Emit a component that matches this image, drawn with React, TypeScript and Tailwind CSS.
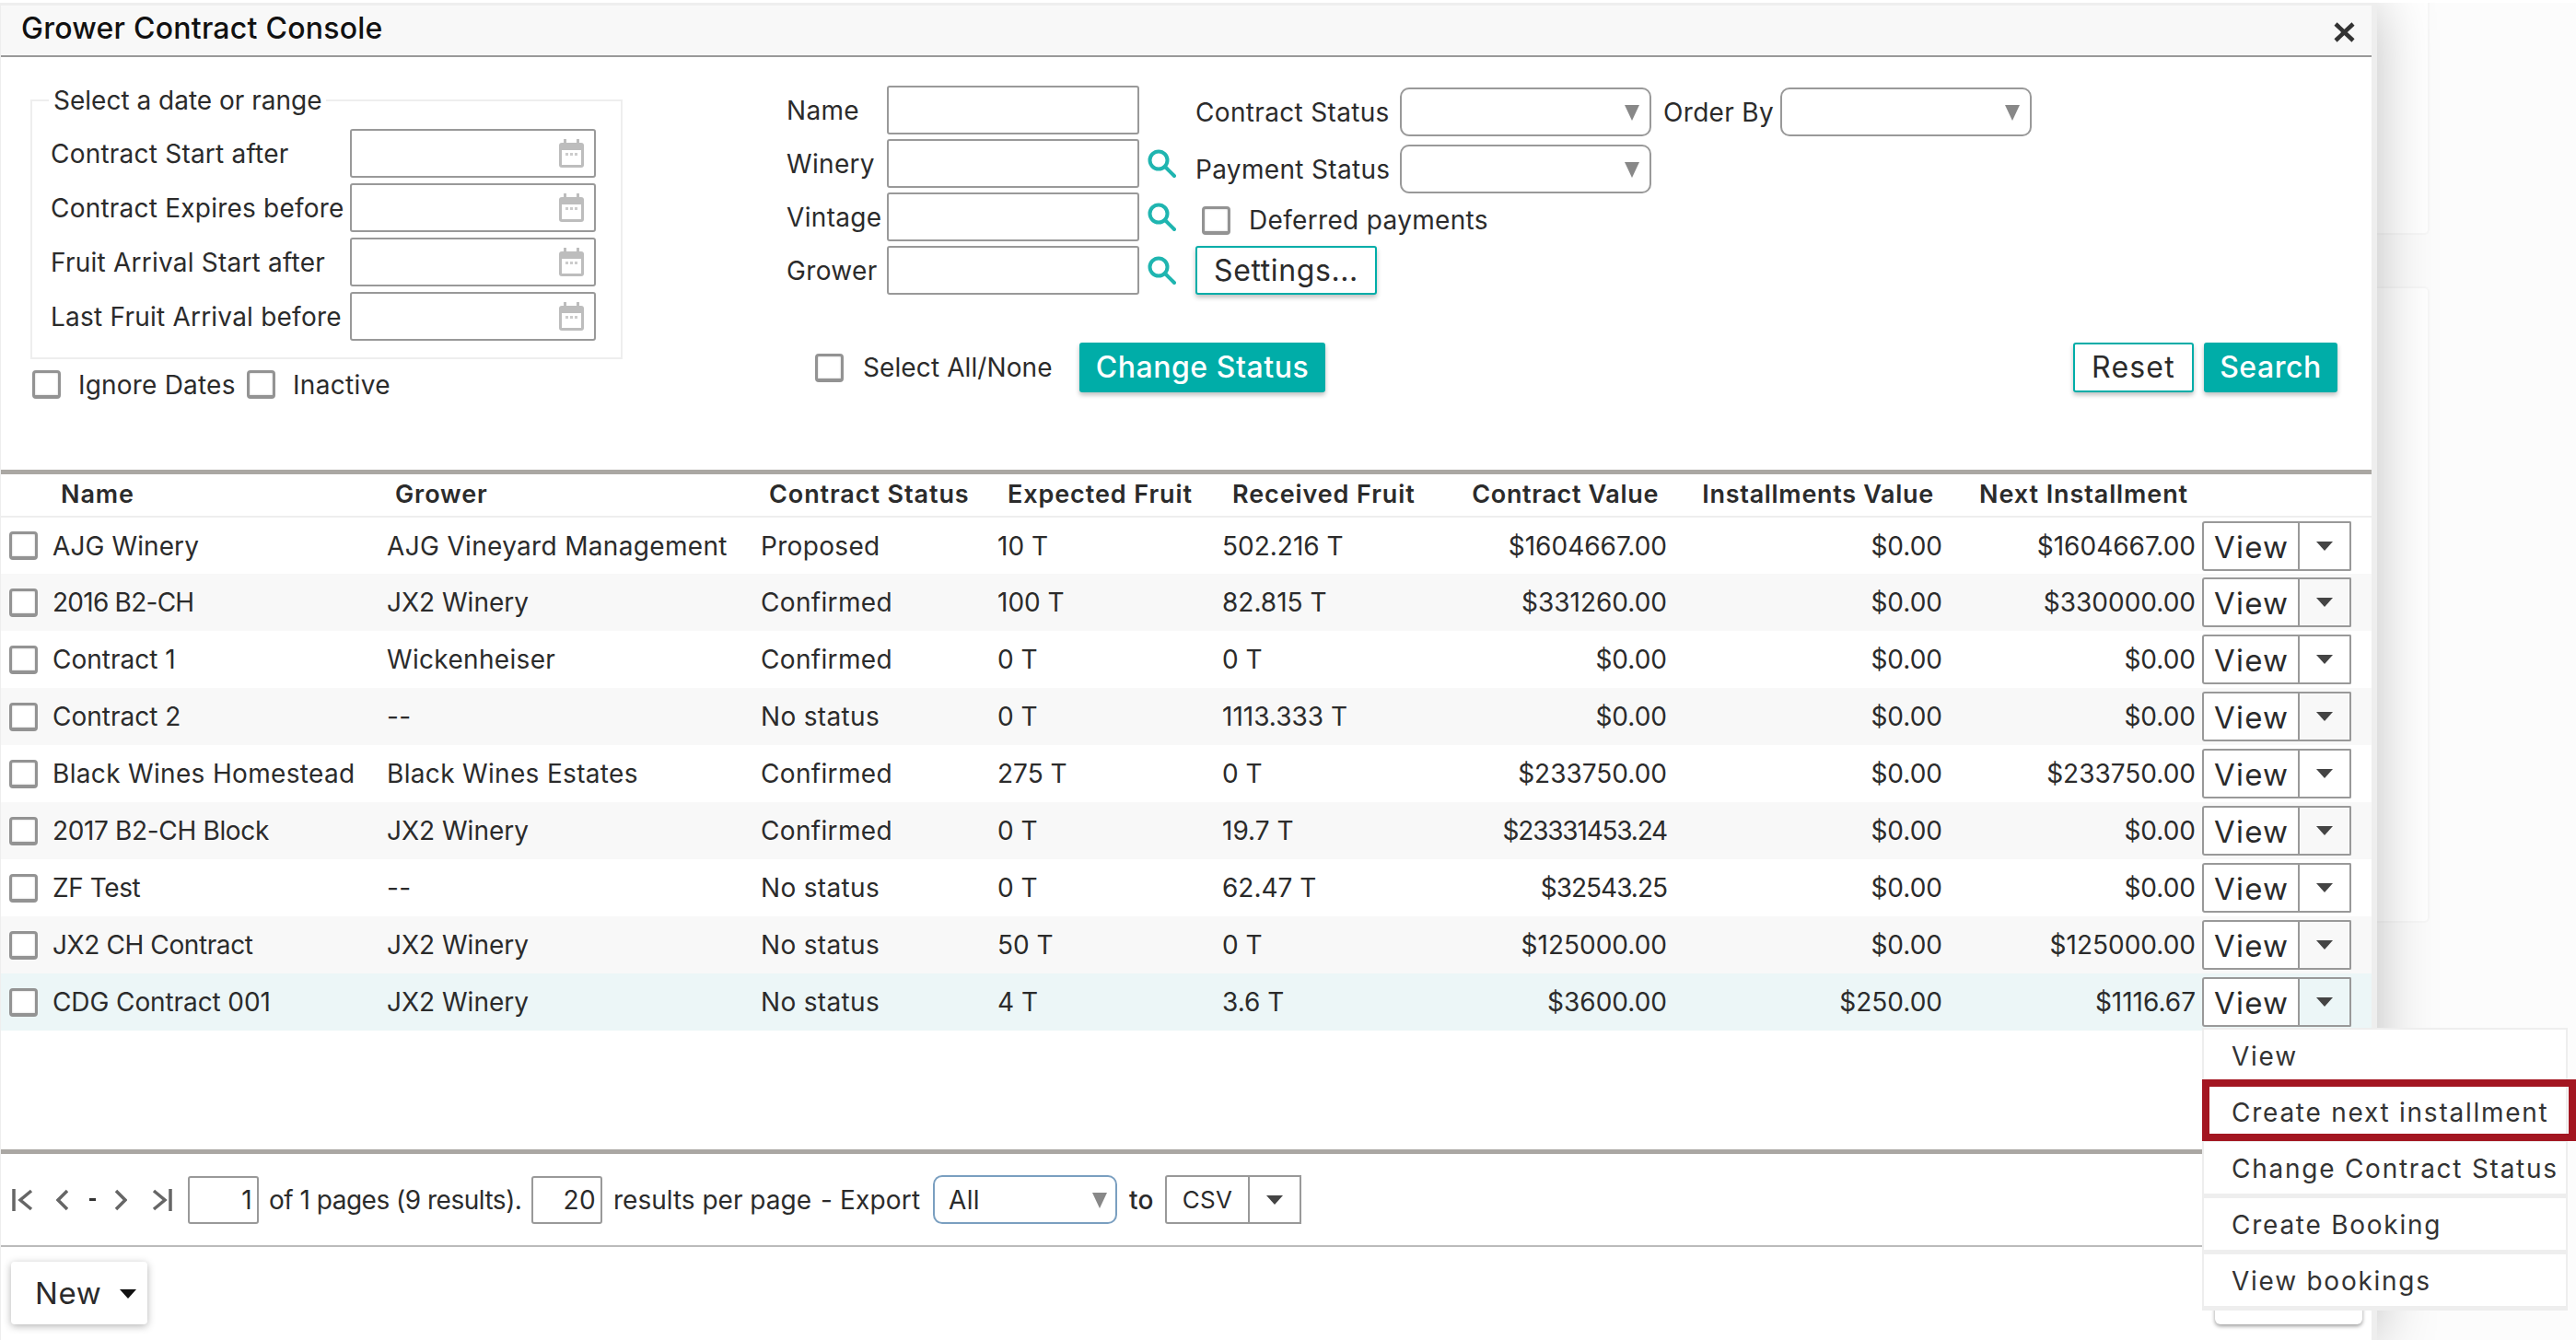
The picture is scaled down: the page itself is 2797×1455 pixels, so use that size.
import React from "react";

const rows = [
  ["AJG Winery", "AJG Vineyard Management", "Proposed", "10 T", "502.216 T", "$1604667.00", "$0.00", "$1604667.00"],
  ["2016 B2-CH", "JX2 Winery", "Confirmed", "100 T", "82.815 T", "$331260.00", "$0.00", "$330000.00"],
  ["Contract 1", "Wickenheiser", "Confirmed", "0 T", "0 T", "$0.00", "$0.00", "$0.00"],
  ["Contract 2", "--", "No status", "0 T", "1113.333 T", "$0.00", "$0.00", "$0.00"],
  ["Black Wines Homestead", "Black Wines Estates", "Confirmed", "275 T", "0 T", "$233750.00", "$0.00", "$233750.00"],
  ["2017 B2-CH Block", "JX2 Winery", "Confirmed", "0 T", "19.7 T", "$23331453.24", "$0.00", "$0.00"],
  ["ZF Test", "--", "No status", "0 T", "62.47 T", "$32543.25", "$0.00", "$0.00"],
  ["JX2 CH Contract", "JX2 Winery", "No status", "50 T", "0 T", "$125000.00", "$0.00", "$125000.00"],
  ["CDG Contract 001", "JX2 Winery", "No status", "4 T", "3.6 T", "$3600.00", "$250.00", "$1116.67"],
];

const nameTrack = [
  "tracking-[0.1px]",
  "tracking-[-0.75px]",
  "tracking-[0px]",
  "tracking-[0px]",
  "tracking-[0.33px]",
  "tracking-[-0.35px]",
  "tracking-[-0.4px]",
  "tracking-[-0.4px]",
  "tracking-[-0.1px]",
];

const valueTrack = [
  "tracking-normal",
  "tracking-normal",
  "tracking-normal",
  "tracking-normal",
  "tracking-normal",
  "tracking-[-1.2px]",
  "tracking-[-1px]",
  "tracking-normal",
  "tracking-normal",
];

function Check() {
  return <span className="block w-[31px] h-[31px] shrink-0 rounded-[4px] border-[3px] border-b-[4px] border-[#939393] bg-white shadow-[inset_0_0_2px_rgba(0,0,0,0.25)]" />;
}

function Cal() {
  return (
    <svg width="27" height="31" viewBox="0 0 27 31" className="absolute right-[11px] top-[9px]">
      <rect x="0" y="4" width="27" height="27" rx="3" fill="#bdbdbd" />
      <rect x="5" y="0" width="3" height="6" fill="#bdbdbd" />
      <rect x="19" y="0" width="3" height="6" fill="#bdbdbd" />
      <rect x="3" y="12" width="21" height="16" fill="#fff" />
      <rect x="7" y="15" width="3" height="3" fill="#ccc" />
      <rect x="12" y="15" width="3" height="3" fill="#ccc" />
      <rect x="17" y="15" width="3" height="3" fill="#ccc" />
    </svg>
  );
}

function DateRow({ label }: { label: string }) {
  return (
    <div className="flex items-center h-[53px]">
      <span className="w-[325px] whitespace-nowrap tracking-[0.22px]">{label}</span>
      <div className="relative w-[267px] h-[53px] rounded-[3px] border-2 border-[#999] bg-white">
        <Cal />
      </div>
    </div>
  );
}

function Lens() {
  return (
    <svg width="31" height="31" viewBox="0 0 31 31" className="ml-[9px] shrink-0">
      <circle cx="12" cy="12" r="9.5" fill="none" stroke="#1fb5b0" strokeWidth="4" />
      <path d="M19 19 L29 29" stroke="#1fb5b0" strokeWidth="4" strokeLinecap="round" />
    </svg>
  );
}

function NameRow({ label, icon }: { label: string; icon?: boolean }) {
  return (
    <div className="flex items-center h-[53px]">
      <span className="w-[109px] whitespace-nowrap">{label}</span>
      <input className="w-[274px] h-[53px] rounded-[3px] border-2 border-[#999] bg-white" aria-label={label} />
      {icon && <Lens />}
    </div>
  );
}

function Arrow({ className }: { className: string }) {
  return (
    <svg width="16" height="17" viewBox="0 0 16 17" className={className}>
      <path d="M0 0 H16 L8 17 Z" fill="#888" />
    </svg>
  );
}

function Select({ w }: { w: string }) {
  return (
    <div className={`relative h-[53px] rounded-[10px] border-2 border-[#999] bg-white ${w}`}>
      <Arrow className="absolute right-[2px] top-[17px] mr-[9px]" />
    </div>
  );
}

function Caret({ color = "#444" }: { color?: string }) {
  return (
    <svg width="18" height="10" viewBox="0 0 18 10">
      <path d="M0 0 H18 L9 10 Z" fill={color} />
    </svg>
  );
}

function ViewGroup() {
  return (
    <div className="flex h-[54px] w-[162px]">
      <div className="w-[106px] rounded-l-[3px] border-2 border-[#999] bg-white pl-[11px] pt-[4px] flex items-center text-[33px] tracking-[1.2px]">
        View
      </div>
      <div className="w-[56px] rounded-r-[2px] border-y-2 border-r-2 border-[#999] flex items-center justify-center">
        <Caret />
      </div>
    </div>
  );
}

function Chevron({ d, w }: { d: string; w: number }) {
  return (
    <svg width={w} height="24" viewBox={`0 0 ${w} 24`} className="shrink-0">
      <path d={d} fill="none" stroke="#666" strokeWidth="3.5" />
    </svg>
  );
}

const th = "font-semibold text-[27px] tracking-[0.9px] whitespace-nowrap";
const td = "whitespace-nowrap";

export default function App() {
  return (
    <div className="relative w-[2797px] h-[1455px] pt-[3px] bg-white overflow-hidden text-[28px] tracking-[0.33px] text-[#2b2b2b] [font-family:Inter,sans-serif]">
      <div className="flex h-[1452px] overflow-hidden bg-[#fcfcfc]">
        <div className="relative z-10 shrink-0 w-[2581px] h-[1452px] flex flex-col bg-white border-t-[3px] border-l border-r-[6px] border-[#eee] shadow-[0_0_60px_rgba(0,0,0,0.25)]">
          {/* title bar */}
          <div className="flex items-start justify-between h-[56px] bg-[#f8f8f8] border-b-2 border-[#999]">
            <h1 className="pl-[22px] pt-[7px] text-[32px] leading-[36px] tracking-[0.25px] font-medium text-[#111]">Grower Contract Console</h1>
            <svg width="23" height="22" viewBox="0 0 23 22" className="mr-[18px] mt-[18px]">
              <path d="M2 2 L21 20 M21 2 L2 20" stroke="#333" strokeWidth="4.5" />
            </svg>
          </div>

          {/* search form */}
          <div className="flex h-[448px] shrink-0">
            <div className="ml-[32px] mt-[31px] w-[643px] shrink-0">
              <fieldset className="border-2 border-[#eee] pl-[20px] pt-[15px] pb-[18px]">
                <legend className="-ml-[2px] px-[5px] leading-[32px] tracking-normal">Select a date or range</legend>
                <div className="flex flex-col gap-[6px]">
                  <DateRow label="Contract Start after" />
                  <DateRow label="Contract Expires before" />
                  <DateRow label="Fruit Arrival Start after" />
                  <DateRow label="Last Fruit Arrival before" />
                </div>
              </fieldset>
              <div className="flex items-center h-[31px] mt-[12px] ml-[2px]">
                <Check />
                <span className="ml-[19px] w-[183px] whitespace-nowrap tracking-[0.2px]">Ignore Dates</span>
                <Check />
                <span className="ml-[19px] whitespace-nowrap">Inactive</span>
              </div>
            </div>

            <div className="ml-[178px] mt-[31px] w-[1684px] shrink-0">
              <div className="flex">
                <div className="flex flex-col gap-[5px] w-[423px] shrink-0">
                  <NameRow label="Name" />
                  <NameRow label="Winery" icon />
                  <NameRow label="Vintage" icon />
                  <NameRow label="Grower" icon />
                </div>
                <div className="ml-[21px] mt-[2px]">
                  <div className="flex items-center">
                    <span className="w-[222px] whitespace-nowrap">Contract Status</span>
                    <Select w="w-[273px]" />
                    <span className="ml-[13px] w-[127px] whitespace-nowrap">Order By</span>
                    <Select w="w-[273px]" />
                  </div>
                  <div className="flex items-center mt-[9px]">
                    <span className="w-[222px] whitespace-nowrap">Payment Status</span>
                    <Select w="w-[273px]" />
                  </div>
                  <div className="flex items-center h-[32px] mt-[13px] ml-[7px]">
                    <Check />
                    <span className="ml-[20px] whitespace-nowrap">Deferred payments</span>
                  </div>
                  <button className="block mt-[12px] w-[197px] h-[53px] rounded-[3px] border-2 border-[#00ada8] bg-white text-[32px] tracking-[0.6px] shadow-[0_3px_5px_rgba(0,0,0,0.25)]">
                    Settings...
                  </button>
                </div>
              </div>
              <div className="flex items-center mt-[52px] h-[54px]">
                <span className="ml-[31px]"><Check /></span>
                <span className="ml-[21px] w-[207px] whitespace-nowrap tracking-[0.1px]">Select All/None</span>
                <button className="ml-[28px] w-[267px] h-[54px] rounded-[3px] bg-[#00ada8] text-white text-[32px] tracking-[0.55px] font-medium shadow-[0_3px_5px_rgba(0,0,0,0.25)]">
                  Change Status
                </button>
                <button className="ml-auto w-[131px] h-[54px] rounded-[3px] border-2 border-[#00ada8] bg-white text-[32px] tracking-[1.2px] shadow-[0_3px_5px_rgba(0,0,0,0.25)]">
                  Reset
                </button>
                <button className="ml-[11px] w-[145px] h-[54px] rounded-[3px] bg-[#00ada8] text-white text-[32px] tracking-[0.55px] font-medium shadow-[0_3px_5px_rgba(0,0,0,0.25)]">
                  Search
                </button>
              </div>
            </div>
          </div>

          {/* table */}
          <div className="h-[738px] shrink-0 border-t-[5px] border-[#aaa7a3]">
            <table className="table-fixed border-collapse w-[2574px]">
              <colgroup>
                <col className="w-[409px]" />
                <col className="w-[406px]" />
                <col className="w-[257px]" />
                <col className="w-[244px]" />
                <col className="w-[273px]" />
                <col className="w-[230px]" />
                <col className="w-[299px]" />
                <col className="w-[272px]" />
                <col className="w-[184px]" />
              </colgroup>
              <thead>
                <tr className="h-[46px] border-b-2 border-[#eee] text-left">
                  <th className={`${th} pl-[65px]`}>Name</th>
                  <th className={`${th} pl-[19px]`}>Grower</th>
                  <th className={`${th} pl-[19px]`}>Contract Status</th>
                  <th className={`${th} pl-[21px]`}>Expected Fruit</th>
                  <th className={`${th} pl-[21px]`}>Received Fruit</th>
                  <th className="font-semibold text-[27px] tracking-[0.65px] whitespace-nowrap pr-[19px] text-right">Contract Value</th>
                  <th className="font-semibold text-[27px] tracking-[0.7px] whitespace-nowrap pr-[19px] text-right">Installments Value</th>
                  <th className={`${th} pr-[15px] text-right`}>Next Installment</th>
                  <th />
                </tr>
              </thead>
              <tbody>
                {rows.map((r, i) => (
                  <tr key={r[0]} className={`h-[62px] ${i === 8 ? "bg-[#ecf6f7]" : i % 2 === 1 ? "bg-[#f8f8f8]" : "bg-white"}`}>
                    <td className={td}>
                      <div className="flex items-center pl-[9px]">
                        <Check />
                        <span className={`ml-[16px] ${nameTrack[i]}`}>{r[0]}</span>
                      </div>
                    </td>
                    <td className={`${td} pl-[10px] ${r[1] === "JX2 Winery" ? "tracking-[0px]" : ""}`}>{r[1]}</td>
                    <td className={`${td} pl-[10px]`}>{r[2]}</td>
                    <td className={`${td} pl-[10px] tracking-[0px]`}>{r[3]}</td>
                    <td className={`${td} pl-[10px] tracking-[0px]`}>{r[4]}</td>
                    <td className={`${td} pr-[10px] text-right ${valueTrack[i]}`}>{r[5]}</td>
                    <td className={`${td} pr-[10px] text-right tracking-normal`}>{r[6]}</td>
                    <td className={`${td} pr-[7px] text-right tracking-normal`}>{r[7]}</td>
                    <td><ViewGroup /></td>
                  </tr>
                ))}
              </tbody>
            </table>
          </div>

          {/* pager */}
          <div className="flex items-center h-[104px] shrink-0 border-t-[5px] border-[#aaa7a3]">
            <span className="ml-[12px] flex"><Chevron w={23} d="M2 0 V24 M21 2 L9 12 L21 22" /></span>
            <span className="ml-[25px] flex"><Chevron w={13} d="M12 2 L2 12 L12 22" /></span>
            <span className="ml-[23px] w-[7px] h-[3px] bg-[#333]" />
            <span className="ml-[21px] flex"><Chevron w={13} d="M1 2 L11 12 L1 22" /></span>
            <span className="ml-[27px] flex"><Chevron w={22} d="M2 2 L14 12 L2 22 M20 0 V24" /></span>
            <input defaultValue="1" aria-label="Page" className="ml-[17px] w-[77px] h-[52px] rounded-[3px] border-2 border-[#999] px-[5px] text-right" />
            <span className="ml-[11px] w-[285px] whitespace-nowrap tracking-[-0.5px]">of 1 pages (9 results).</span>
            <input defaultValue="20" aria-label="Results per page" className="w-[77px] h-[52px] rounded-[3px] border-2 border-[#999] px-[5px] text-right" />
            <span className="ml-[12px] w-[225px] whitespace-nowrap tracking-normal">results per page</span>
            <span className="w-[21px]">-</span>
            <span className="w-[101px] whitespace-nowrap tracking-[0.2px]">Export</span>
            <div className="relative w-[200px] h-[53px] rounded-[10px] border-2 border-[#7a9fc0] pl-[15px] flex items-center">
              All
              <Arrow className="absolute right-[9px] top-[17px]" />
            </div>
            <span className="ml-[13px] w-[39px] font-medium">to</span>
            <div className="flex h-[53px] w-[148px]">
              <div className="w-[92px] rounded-l-[3px] border-2 border-[#999] flex items-center justify-center text-[26px]">CSV</div>
              <div className="w-[56px] border-y-2 border-r-2 border-[#999] flex items-center justify-center"><Caret /></div>
            </div>
          </div>

          {/* footer */}
          <div className="flex justify-between flex-1 border-t-2 border-[#bbb] pt-[16px] pl-[11px] pr-[10px]">
            <button className="flex items-center w-[148px] h-[68px] rounded-[4px] bg-white pl-[26px] pt-[2px] text-[33px] tracking-[0.6px] shadow-[0_2px_8px_rgba(0,0,0,0.3)]">
              New
              <span className="ml-[20px] flex"><Caret color="#111" /></span>
            </button>
            <button aria-label="Close" className="w-[160px] h-[68px] rounded-[6px] bg-white shadow-[0_2px_4px_rgba(0,0,0,0.4)]" />
          </div>
        </div>

        {/* page behind the dialog */}
        <div className="flex flex-col w-[57px] shrink-0 gap-[56px]">
          <div className="h-[252px] rounded-br-[6px] bg-white border-r-2 border-b-2 border-[#f7f7f7]" />
          <div className="h-[691px] rounded-r-[6px] bg-white border-2 border-l-0 border-[#f7f7f7]" />
        </div>
      </div>

      {/* open row menu */}
      <div className="absolute z-20 left-[2391px] top-[1116px] w-[397px] bg-white border-x-2 border-t-2 border-[#eee] text-[#333] tracking-[1.75px]">
        {["View", "Create next installment", "Change Contract Status", "Create Booking", "View bookings"].map((m) => (
          <div key={m} className="flex items-center pl-[30px] pt-[1px] whitespace-nowrap h-[61px] border-b-[5px] border-[#eee]">
            {m}
          </div>
        ))}
      </div>
      {/* annotation around the highlighted item */}
      <div className="absolute z-30 left-[2391px] top-[1172px] w-[406px] h-[67px] border-8 border-[#a31621]" />
    </div>
  );
}
